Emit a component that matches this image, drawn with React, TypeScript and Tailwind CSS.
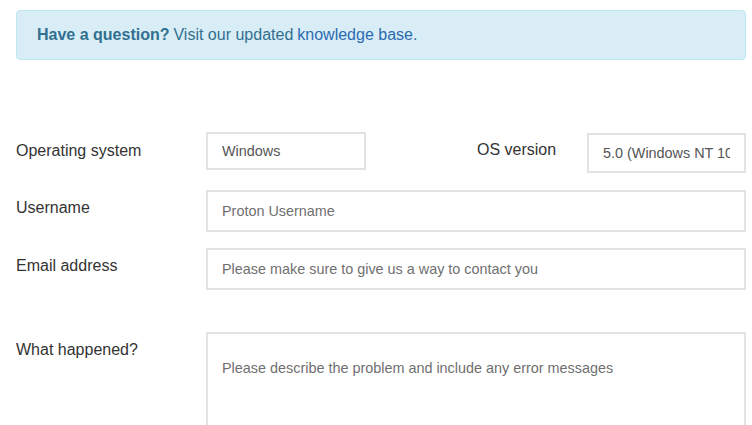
import React from "react";

export default function App() {
  const inputCls =
    "h-[42px] w-full border-2 border-[#e3e3e3] bg-white px-[14px] text-[14.4px] text-[#555] placeholder:text-[#6f6f6f] outline-none font-['Liberation_Sans',Arial,sans-serif]";
  return (
    <div className="min-h-[425px] bg-white font-['Liberation_Sans',Arial,sans-serif] text-[#333]">
      <div className="ml-4 w-[730px] pt-[10px]">
        <div className="flex h-[50px] items-center rounded-[4px] border border-[#bce8f1] bg-[#d9edf7] px-5 text-[16px] text-[#31708f]">
          <span className="font-bold">Have a question?</span>
          <span className="ml-[4px]">Visit our updated</span>
          <a className="ml-[4px] text-[#2b6cb0]" href="#">
            knowledge base.
          </a>
        </div>

        <div className="mt-[72px] flex flex-col">
          <div className="flex items-start">
            <label className="w-[190px] shrink-0 pt-[10px] text-[16px] leading-[18px]">Operating system</label>
            <input className={inputCls + " !h-[38px] !w-[160px] shrink-0"} readOnly value="Windows" />
            <label className="ml-[111px] w-[78px] shrink-0 whitespace-nowrap pt-[9px] text-[16px] leading-[18px]">OS version</label>
            <div className="ml-[32px] min-w-0 flex-1 pt-[1px]">
              <input className={inputCls + " !h-[40px]"} readOnly value="5.0 (Windows NT 10.0; Win64; x64)" />
            </div>
          </div>

          <div className="mt-[17px] flex items-start">
            <label className="w-[190px] shrink-0 pt-[9px] text-[16px] leading-[18px]">Username</label>
            <input className={inputCls + " flex-1"} placeholder="Proton Username" />
          </div>

          <div className="mt-[16px] flex items-start">
            <label className="w-[190px] shrink-0 pt-[9px] text-[16px] leading-[18px]">Email address</label>
            <input className={inputCls + " flex-1"} placeholder="Please make sure to give us a way to contact you" />
          </div>

          <div className="mt-[42px] flex items-start">
            <label className="w-[190px] shrink-0 pt-[9px] text-[16px] leading-[18px]">What happened?</label>
            <textarea
              className="h-[120px] flex-1 resize-none border-2 border-[#e3e3e3] bg-white px-[14px] pt-[25px] text-[14.4px] leading-[18px] text-[#555] placeholder:text-[#6f6f6f] outline-none font-['Liberation_Sans',Arial,sans-serif]"
              placeholder="Please describe the problem and include any error messages"
            />
          </div>
        </div>
      </div>
    </div>
  );
}
